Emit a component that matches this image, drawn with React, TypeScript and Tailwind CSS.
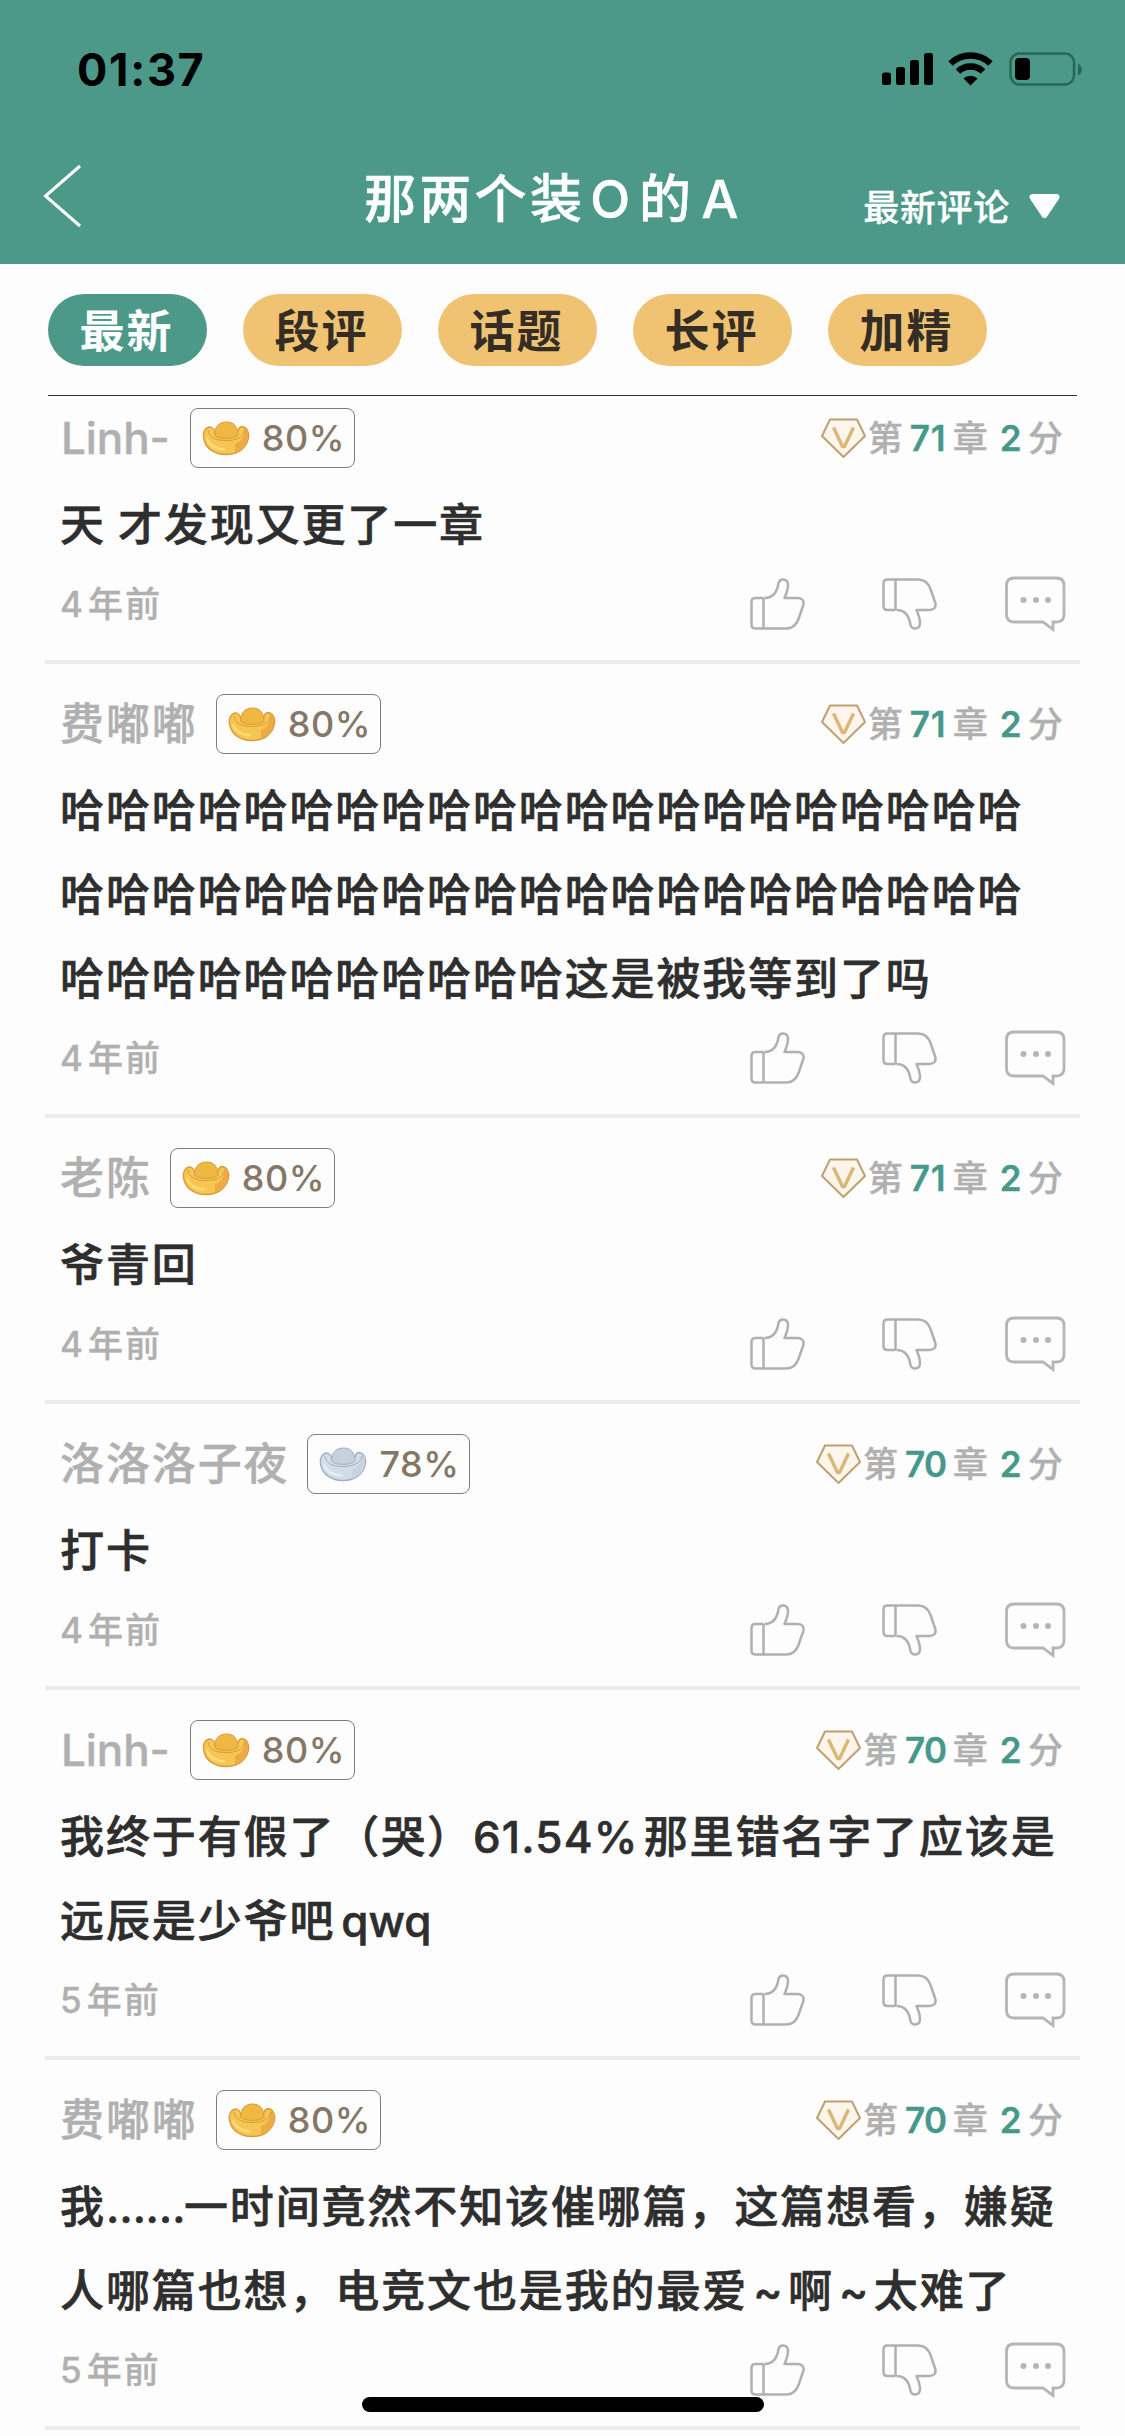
import React, { type FC as ReactFC } from 'react';
import { clsx } from 'clsx';

interface IComment {
  id: number;
  name: string;
  rate: string;
  silver?: boolean;
  chapter: string;
  lines: string[];
  time: string;
}

const tabs = ['最新', '段评', '话题', '长评', '加精'];

const comments: IComment[] = [
  { id: 1, name: 'Linh-', rate: '80%', chapter: '71', lines: ['天 才发现又更了一章'], time: '4年前' },
  {
    id: 2,
    name: '费嘟嘟',
    rate: '80%',
    chapter: '71',
    lines: ['哈'.repeat(21), '哈'.repeat(21), `${'哈'.repeat(11)}这是被我等到了吗`],
    time: '4年前',
  },
  { id: 3, name: '老陈', rate: '80%', chapter: '71', lines: ['爷青回'], time: '4年前' },
  { id: 4, name: '洛洛洛子夜', rate: '78%', silver: true, chapter: '70', lines: ['打卡'], time: '4年前' },
  {
    id: 5,
    name: 'Linh-',
    rate: '80%',
    chapter: '70',
    lines: ['我终于有假了（哭）61.54%那里错名字了应该是', '远辰是少爷吧qwq'],
    time: '5年前',
  },
  {
    id: 6,
    name: '费嘟嘟',
    rate: '80%',
    chapter: '70',
    lines: ['我……一时间竟然不知该催哪篇，这篇想看，嫌疑', '人哪篇也想，电竞文也是我的最爱~啊~太难了'],
    time: '5年前',
  },
];

// Latin runs get a little air on both sides, the ellipsis is pulled together
const MixedText: ReactFC<{ text: string }> = ({ text }) => (
  <>
    {text.split(/([A-Za-z0-9.%]+|~|…+| )/).map((part, i) => {
      if (part === ' ') return <span key={i} className="inline-block w-[12px]" />;
      if (part.startsWith('…'))
        return (
          <span key={i} className="inline-block w-[78px] tracking-[-0.5px]">
            {part}
          </span>
        );
      if (part === '~')
        return (
          <span key={i} className="mr-[5px] ml-[5px] tracking-[0.5px]">
            ~
          </span>
        );
      if (/^\d/.test(part))
        return (
          <span key={i} className="mr-[5px] tracking-[1.2px]">
            {part}
          </span>
        );
      if (/^[A-Za-z]/.test(part))
        return (
          <span key={i} className="ml-1.5 tracking-normal">
            {part}
          </span>
        );
      return <span key={i}>{part}</span>;
    })}
  </>
);

const StatusIcons: ReactFC = () => (
  <svg width="202" height="36" viewBox="0 0 202 36">
    <rect x="0" y="21.5" width="9" height="12.5" rx="2.5" />
    <rect x="14" y="16" width="9" height="18" rx="2.5" />
    <rect x="28" y="9" width="9" height="25" rx="2.5" />
    <rect x="42" y="2" width="9" height="32" rx="2.5" />
    <g fill="none" stroke="#000" strokeWidth="6.5">
      <path d="M68.5 12.5a29 29 0 0 1 40 0" />
      <path d="M76 20.5a18 18 0 0 1 25 0" />
    </g>
    <path d="M88.5 34.5l-7-7a10 10 0 0 1 14 0z" />
    <rect x="128.5" y="2.5" width="63.5" height="31" rx="9" fill="none" stroke="#27665a" strokeWidth="2.5" />
    <path d="M196 13c5 1.5 5 10 0 11.5z" fill="#27665a" />
    <rect x="133" y="7" width="15" height="22" rx="4" />
  </svg>
);

const Ingot: ReactFC<{ silver?: boolean }> = ({ silver }) => {
  const edge = silver ? '#a3aec0' : '#d99a3c';
  return (
    <svg width="48" height="35" viewBox="0 0 48 35" strokeWidth="1.3" stroke={edge}>
      <path
        d="M7 6C2.5 7 .5 12 1.5 17C3.5 28 13 33.5 24 33.5S44.5 28 46.5 17C47.5 11 45 6 40 5.5C37 5.5 36 9 35 12H13C12.5 9 10 5.5 7 6z"
        fill={silver ? '#d3dde8' : '#f6c552'}
      />
      <path
        d="M33 31.5C40 29 45 24 46 17C46.5 12 45 7 42 6.5C43.5 15 38 22 33 23z"
        fill={silver ? '#c8d2e0' : '#edac43'}
        stroke="none"
      />
      <path d="M6 9C7 16 13 19.5 24 19.5S41 16 43 9" fill="none" strokeWidth="1" />
      <path
        d="M12.5 14C12.5 5.5 17.5 1 24.5 1S36 5.5 36 14C33 18.5 16 18.5 12.5 14z"
        fill={silver ? '#c6d0de' : '#efb840'}
        strokeWidth="1"
      />
      <path
        d="M5 18C8 25 14 28 22 28.5"
        fill="none"
        stroke={silver ? '#e6eef5' : '#fbdc78'}
        strokeWidth="2.5"
        strokeLinecap="round"
      />
    </svg>
  );
};

const VipGem: ReactFC = () => (
  <svg width="46" height="42" viewBox="0 0 46 42" fill="none" strokeLinejoin="round">
    <path d="M10 2.5h27L45 19L23.5 40L2 19z" fill="#fbf5ec" stroke="#bfa070" strokeWidth="2" />
    <path d="M13.5 10.5L22.5 29.5h2L33.5 10.5" stroke="#dcb676" strokeWidth="3.4" />
  </svg>
);

const Thumb: ReactFC<{ down?: boolean }> = ({ down }) => (
  <svg
    width="56"
    height="52"
    viewBox="0 0 56 52"
    fill="none"
    stroke="#b0b0b0"
    strokeWidth="2.5"
    strokeLinejoin="round"
    className={clsx(down && '-scale-y-100')}
  >
    <path d="M13.5 20H5.5Q1.5 20 1.5 24V46.5Q1.5 50.5 5.5 50.5H36C42 50.5 46 48 48.5 41L53 28C55 22 51.5 20 47 20H34.5Q38 12 38 7Q38 1.5 33 1.5Q29.5 1.5 28.5 5C27.5 12 25 20 14.5 20M13.5 20V50.5" />
  </svg>
);

const Bubble: ReactFC = () => (
  <svg width="61" height="57" viewBox="0 0 61 57" fill="none" stroke="#b5b5b5" strokeWidth="2.8">
    <path d="M9 2H51.5Q59 2 59 9.5V38.5Q59 46 51.5 46H48V53.5L38 46H9Q1.5 46 1.5 38.5V9.5Q1.5 2 9 2z" />
    <g fill="#b5b5b5" stroke="none">
      <circle cx="18.5" cy="24" r="3" />
      <circle cx="31" cy="24" r="3" />
      <circle cx="43" cy="24" r="3" />
    </g>
  </svg>
);

const Comment: ReactFC<{ data: IComment }> = ({ data }) => (
  <li className="mx-[45px] border-b-4 border-[#ececec] pt-[30px]">
    <div className="flex h-[60px] items-center pr-[17px] pl-[15px]">
      <span
        className={clsx(
          'text-[44px] leading-none font-medium text-[#b0b0b0] [-webkit-text-stroke:0.4px]',
          data.name === 'Linh-' ? 'mr-[2px] ml-px tracking-[-0.1px]' : 'tracking-[1.88px]',
        )}
      >
        {data.name}
      </span>
      <span className="ml-[18px] flex h-[60px] items-center gap-3 rounded-lg border-[1.5px] border-[#7d7d7d] pr-[9px] pl-[11px]">
        <Ingot silver={data.silver} />
        <span className="text-[36px] leading-none font-medium tracking-[0.6px] text-[#857666]">{data.rate}</span>
      </span>
      <span className="ml-auto flex items-center text-[35px] leading-none font-medium text-[#b0b0b0] [-webkit-text-stroke:0.3px]">
        <VipGem />
        <span className="ml-0.5">第</span>
        <b
          className={clsx(
            'mr-[6px] ml-[7px] font-semibold text-[#46998a]',
            data.chapter === '71' ? 'tracking-[1px]' : 'tracking-[-0.5px]',
          )}
        >
          {data.chapter}
        </b>
        章
        <b className="mr-[7px] ml-[12px] font-semibold tracking-[-0.5px] text-[#46998a]">2</b>分
      </span>
    </div>
    <div className="mt-3.5 pl-[15px] text-[44px] leading-[84px] font-medium tracking-[1.88px] whitespace-nowrap text-[#2e2e2e] [-webkit-text-stroke:0.6px]">
      {data.lines.map((line, i) => (
        <p key={i} className="relative top-px">
          <MixedText text={line} />
        </p>
      ))}
    </div>
    <div className="mb-[18px] flex h-[76px] items-center pr-3.5 pl-[15px]">
      <span className="text-[35px] leading-none font-medium text-[#b0b0b0] [-webkit-text-stroke:0.3px]">
        {data.time.slice(0, 1)}
        <span className="ml-[5px] tracking-[2px]">{data.time.slice(1)}</span>
      </span>
      <span className="ml-auto flex items-center">
        <Thumb />
        <span className="mr-[67px] ml-[76px]">
          <Thumb down />
        </span>
        <Bubble />
      </span>
    </div>
  </li>
);

const App: ReactFC = () => (
  <div className="relative h-[2436px] w-[1125px] overflow-hidden bg-[#fdfdfd] font-['Inter','Noto_Sans_CJK_SC',sans-serif]">
    <header className="h-[264px] bg-[#4c998a]">
      <div className="flex h-[138px] items-center justify-between pr-[41px] pl-[77px]">
        <span className="text-[45px] leading-none font-bold tracking-[1.7px] text-black">01:37</span>
        <StatusIcons />
      </div>
      <div className="flex h-[126px] items-start pl-[43px] text-white">
        <svg width="40" height="64" viewBox="0 0 40 64" fill="none" stroke="#fff" strokeWidth="3" className="mt-[26px]">
          <path d="M37 2L2.5 32L37 62" />
        </svg>
        <h1 className="mt-9 ml-[281px] text-[52px] leading-none font-medium tracking-[3.3px] whitespace-nowrap [-webkit-text-stroke:0.5px]">
          那两个装<span className="mr-[9px] ml-[5px] tracking-normal">O</span>的<span className="ml-[7px]">A</span>
        </h1>
        <button className="mt-[52px] mr-16 ml-auto flex items-center gap-[18px] text-[36px] leading-none font-medium tracking-[0.7px] [-webkit-text-stroke:0.3px]">
          最新评论
          <svg
            width="33"
            height="27"
            viewBox="0 0 33 27"
            fill="#fff"
            stroke="#fff"
            strokeWidth="6"
            strokeLinejoin="round"
            className="-mt-1"
          >
            <path d="M4.5 4h24L16.5 22z" />
          </svg>
        </button>
      </div>
    </header>
    <nav className="mx-12 flex h-[132px] gap-9 border-b border-[#333] pt-[30px]">
      {tabs.map((tab, i) => (
        <button
          key={tab}
          className={clsx(
            'h-[72px] w-[159px] rounded-full pt-0.5 pr-0.5 text-[45px] leading-none font-semibold tracking-[2px]',
            i === 0 ? 'bg-[#4c998a] text-white' : 'bg-[#f0c373] text-[#332d25]',
          )}
        >
          {tab}
        </button>
      ))}
    </nav>
    <ul className="-mt-[18px]">
      {comments.map(item => (
        <Comment key={item.id} data={item} />
      ))}
    </ul>
    <div className="absolute top-[2397px] left-[362px] h-[15px] w-[402px] rounded-full bg-black" />
  </div>
);

export default App;
